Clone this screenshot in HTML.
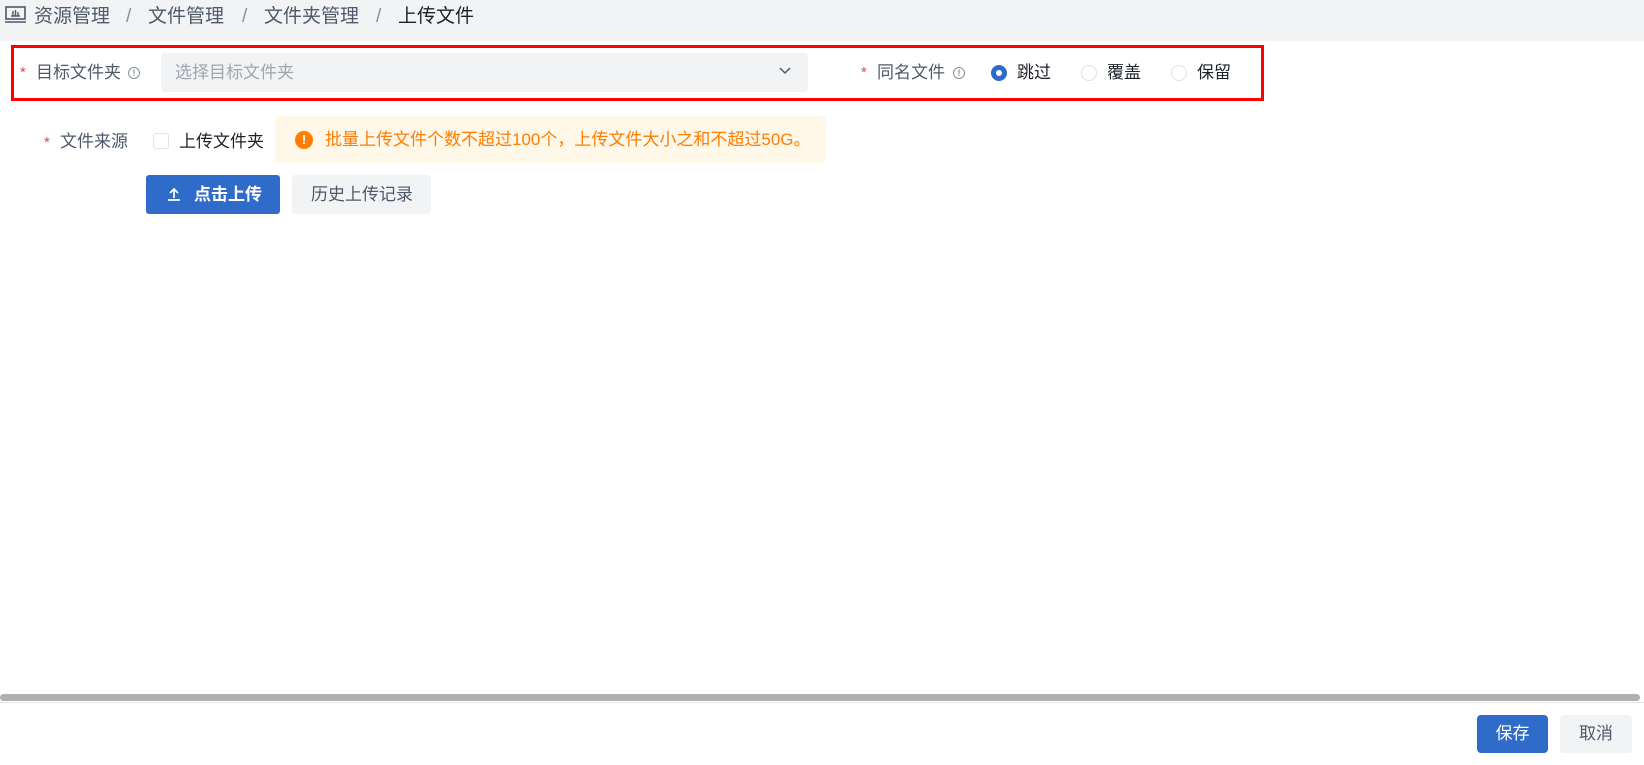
<!DOCTYPE html>
<html><head><meta charset="utf-8"><style>
*{box-sizing:border-box;margin:0;padding:0}
body{width:1644px;height:765px;background:#fff;font-family:"Liberation Sans","Noto Sans CJK SC",sans-serif;position:relative;overflow:hidden;color:#333}
.a{position:absolute;white-space:nowrap}
.hdr{left:0;top:0;width:1644px;height:41px;background:#f2f3f5}
.bc{top:5px;font-size:19px;color:#4e5969;line-height:24px}
.star{color:#f53f3f;font-size:15px}
.lbl{font-size:17px;color:#4e5969;line-height:22px}
.txt{font-size:17px;color:#1d2129;line-height:22px}
.info{width:12px;height:12px;border:1.3px solid #86909c;border-radius:50%;font-size:9px;color:#86909c;text-align:center;line-height:10px;font-weight:bold}
.radio{width:16px;height:16px;border-radius:50%;border:1.5px solid #e0e2e8;background:#fff}
</style></head><body>
<div class="a hdr"></div>
<svg class="a" style="left:5px;top:6px" width="21" height="18" viewBox="0 0 21 18"><rect x="1" y="1" width="19" height="12" fill="none" stroke="#4e5969" stroke-width="1.6"/><path d="M0 16h21" stroke="#4e5969" stroke-width="1.6"/><path d="M6 10h9M8 10V5M10.5 10V4M13 10V6" stroke="#4e5969" stroke-width="1.4"/></svg>
<div class="a bc" style="left:34px">资源管理</div>
<div class="a bc" style="left:126px;color:#86909c">/</div>
<div class="a bc" style="left:148px">文件管理</div>
<div class="a bc" style="left:242px;color:#86909c">/</div>
<div class="a bc" style="left:264px">文件夹管理</div>
<div class="a bc" style="left:376px;color:#86909c">/</div>
<div class="a bc" style="left:398px;color:#1d2129">上传文件</div>

<div class="a" style="left:11px;top:45px;width:1253px;height:56px;border:3px solid #f00"></div>
<div class="a star" style="left:20px;top:64px">*</div>
<div class="a lbl" style="left:36px;top:62px">目标文件夹</div>
<div class="a info" style="left:128px;top:67px">!</div>
<div class="a" style="left:161px;top:53px;width:647px;height:39px;background:#f2f3f5;border-radius:4px"></div>
<div class="a" style="left:175px;top:62px;font-size:17px;color:#a0a5ad;line-height:22px">选择目标文件夹</div>
<svg class="a" style="left:778px;top:66px" width="14" height="10" viewBox="0 0 14 10"><path d="M2 2l5 5 5-5" fill="none" stroke="#4e5969" stroke-width="1.5"/></svg>
<div class="a star" style="left:861px;top:64px">*</div>
<div class="a lbl" style="left:877px;top:62px">同名文件</div>
<div class="a info" style="left:953px;top:67px">!</div>
<div class="a radio" style="left:991px;top:65px;border:5px solid #2f6bc9;background:#fff"></div>
<div class="a txt" style="left:1017px;top:62px">跳过</div>
<div class="a radio" style="left:1081px;top:65px"></div>
<div class="a txt" style="left:1107px;top:62px">覆盖</div>
<div class="a radio" style="left:1171px;top:65px"></div>
<div class="a txt" style="left:1197px;top:62px">保留</div>

<div class="a star" style="left:44px;top:134px">*</div>
<div class="a lbl" style="left:60px;top:131px">文件来源</div>
<div class="a" style="left:153px;top:133px;width:16px;height:16px;border:1.5px solid #e0e2e8;border-radius:3px"></div>
<div class="a txt" style="left:179px;top:131px">上传文件夹</div>
<div class="a" style="left:275px;top:116px;width:551px;height:47px;background:#fff7e8;border-radius:4px"></div>
<div class="a" style="left:295px;top:131px;width:18px;height:18px;border-radius:50%;background:#ff7d00;color:#fff;font-size:13px;font-weight:bold;text-align:center;line-height:18px">!</div>
<div class="a" style="left:325px;top:129px;font-size:17px;color:#ff7d00;line-height:22px">批量上传文件个数不超过100个，上传文件大小之和不超过50G。</div>

<div class="a" style="left:146px;top:175px;width:134px;height:39px;background:#2f6bc9;border-radius:3px"></div>
<svg class="a" style="left:166px;top:186px" width="16" height="16" viewBox="0 0 16 16"><path d="M8 12V3M4 7l4-4 4 4M2 14h12" fill="none" stroke="#fff" stroke-width="1.7"/></svg>
<div class="a" style="left:194px;top:184px;font-size:17px;color:#fff;line-height:22px;font-weight:bold">点击上传</div>
<div class="a" style="left:292px;top:175px;width:139px;height:39px;background:#f2f3f5;border-radius:3px"></div>
<div class="a" style="left:311px;top:184px;font-size:17px;color:#4e5969;line-height:22px">历史上传记录</div>

<div class="a" style="left:0;top:694px;width:1640px;height:7px;background:#b0b0b0;border-radius:4px"></div>
<div class="a" style="left:0;top:702px;width:1644px;height:1px;background:#e5e6eb"></div>
<div class="a" style="left:1477px;top:715px;width:71px;height:38px;background:#2f6bc9;border-radius:4px;color:#fff;font-size:17px;text-align:center;line-height:38px">保存</div>
<div class="a" style="left:1560px;top:715px;width:72px;height:38px;background:#f2f3f5;border-radius:4px;color:#4e5969;font-size:17px;text-align:center;line-height:38px">取消</div>
</body></html>
